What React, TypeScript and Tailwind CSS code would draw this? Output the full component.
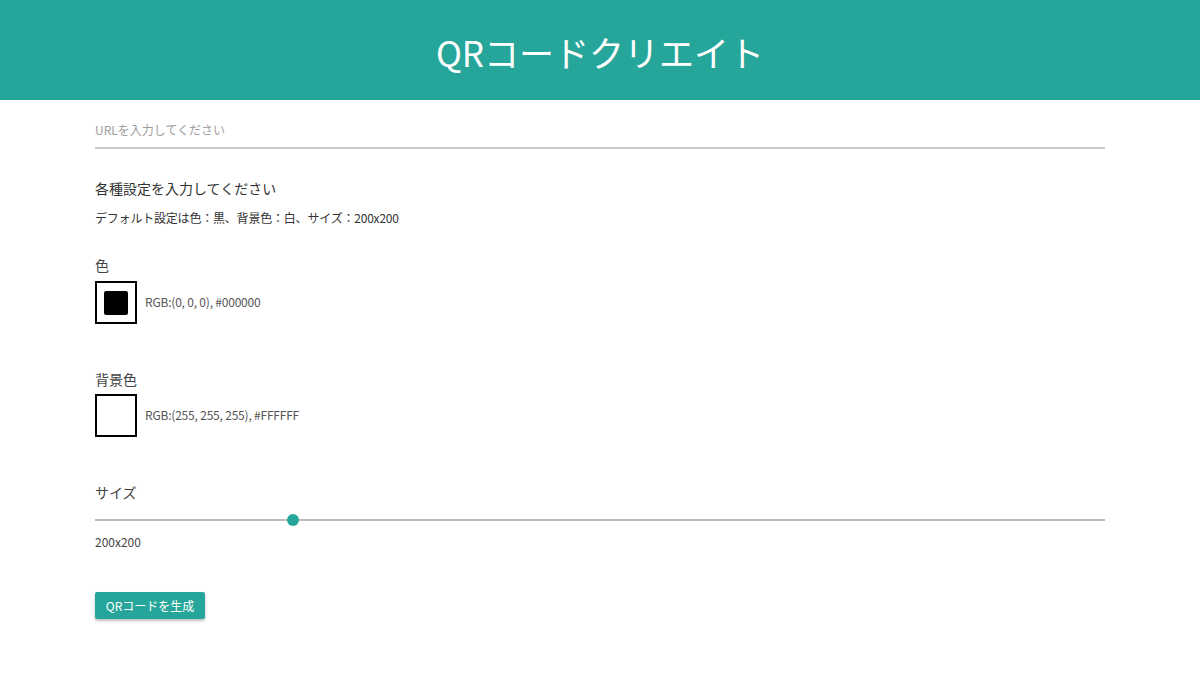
import React from "react";

const font = { fontFamily: '"Noto Sans CJK JP", sans-serif' };

function Swatch({ fill }: { fill?: string }) {
  return (
    <div className="w-[42px] h-[43px] border-2 border-black flex items-center justify-center bg-white">
      {fill && <div className="w-[24px] h-[24px] rounded-[2px]" style={{ background: fill }} />}
    </div>
  );
}

export default function App() {
  const sizePct = 19.6;
  return (
    <div className="min-h-[676px] bg-white text-[#333]" style={font}>
      <header className="h-[100px] bg-[#26a69a] flex items-center justify-center">
        <h1 className="text-white text-[35px] leading-none pt-[3px]">QRコードクリエイト</h1>
      </header>

      <main className="px-[95px]">
        <div className="pt-[16px] border-b-2 border-[#c8c8c8] h-[49px]">
          <input
            className="w-full outline-none text-[12px] leading-[20px] placeholder:text-[#9e9e9e]"
            placeholder="URLを入力してください"
          />
        </div>

        <p className="mt-[29px] text-[14px] leading-[20px] text-[#333]">各種設定を入力してください</p>
        <p className="mt-[10px] text-[12px] leading-[20px] text-[#333] tracking-[-0.2px]">
          デフォルト設定は色：黒、背景色：白、サイズ：200x200
        </p>

        <p className="mt-[27px] text-[14px] leading-[20px] text-[#444]">色</p>
        <div className="mt-[6px] flex items-center gap-[8px]">
          <Swatch fill="#000000" />
          <span className="text-[12px] text-[#555] -mt-[1px] tracking-[-0.2px]">RGB:(0, 0, 0), #000000</span>
        </div>

        <p className="mt-[45px] text-[14px] leading-[20px] text-[#444]">背景色</p>
        <div className="mt-[5px] flex items-center gap-[8px]">
          <Swatch />
          <span className="text-[12px] text-[#555] -mt-[1px] tracking-[-0.2px]">RGB:(255, 255, 255), #FFFFFF</span>
        </div>

        <p className="mt-[45px] text-[14px] leading-[20px] text-[#444]">サイズ</p>
        <div className="relative mt-[11px] h-[14px] flex items-center">
          <div className="w-full h-[2px] bg-[#bdbdbd]" />
          <div
            className="absolute top-[1px] w-[12px] h-[12px] rounded-full bg-[#26a69a] -translate-x-1/2"
            style={{ left: `${sizePct}%` }}
          />
        </div>
        <p className="mt-[5px] text-[12px] leading-[20px] text-[#444]">200x200</p>

        <button className="mt-[40px] h-[27px] w-[110px] rounded-[2px] bg-[#26a69a] text-white text-[12px] shadow-[0_2px_3px_rgba(0,0,0,0.25)]">
          QRコードを生成
        </button>
      </main>
    </div>
  );
}
